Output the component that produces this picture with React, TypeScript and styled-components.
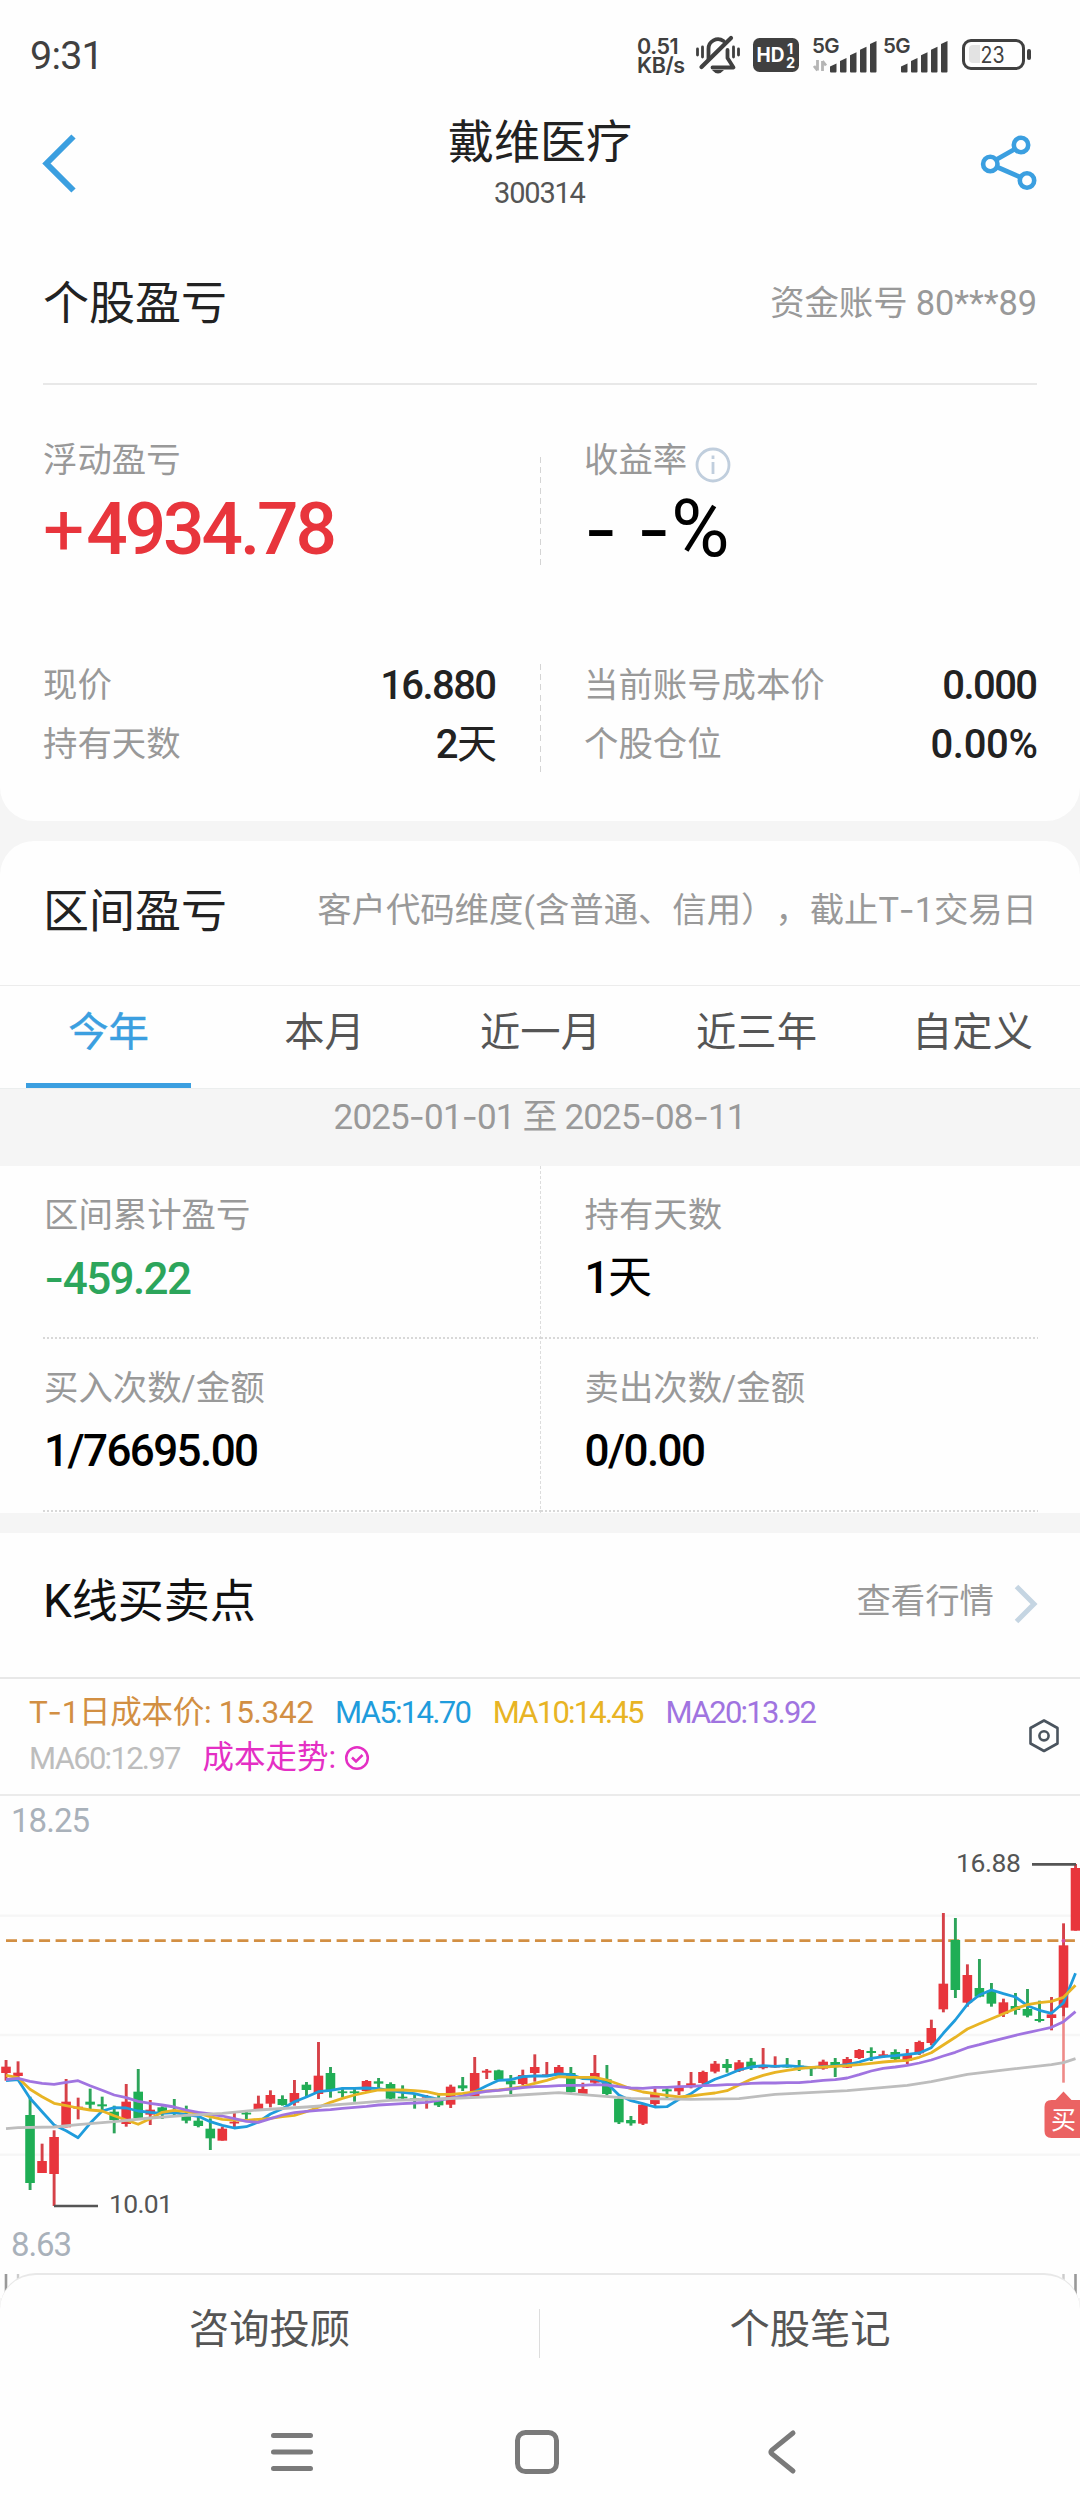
import React from 'react';
import styled, { createGlobalStyle } from 'styled-components';

const Global = createGlobalStyle`
  * { box-sizing: border-box; }
  body { margin: 0; background: #f5f5f5; font-family: Roboto, 'Noto Sans CJK SC', sans-serif; text-spacing-trim: space-all; }
  svg { display: block; flex: none; overflow: visible; }
`;

const BLUE = '#3b9fe0';
const RED = '#e8353c';
const GREEN = '#1fae55';

const Screen = styled.div`
  width: 1080px;
  height: 2520px;
  overflow: hidden;
  display: flex;
  flex-direction: column;
  background: #f5f5f5;
`;

const Txt = styled.span<{ $s: number; $c?: string; $ls?: number; $w?: number }>`
  font-size: ${p => p.$s}px;
  line-height: 1;
  color: ${p => p.$c || '#222'};
  letter-spacing: ${p => p.$ls || 0}px;
  margin-right: ${p => -(p.$ls || 0)}px;
  font-weight: ${p => p.$w || 400};
  white-space: nowrap;
`;
const Dash = styled.span`
  font-family: Inter, sans-serif;
`;
const Unit = styled.span`
  font-weight: 400;
`;
const Sign = styled.span`
  font-weight: 400;
  margin-right: 5px;
`;
const Percent = styled.span`
  font-size: 80px;
`;

const StatusBar = styled.div`
  height: 110px;
  padding: 0 48px 0 30px;
  display: flex;
  align-items: center;
  background: #fefefe;
  flex: none;
`;
const StatusIcons = styled.div`
  margin-left: auto;
  display: flex;
  align-items: center;
`;
const NetSpeed = styled.div`
  width: 48px;
  margin-right: 10px;
  padding-top: 1px;
  font: 600 21.5px/19px Inter, sans-serif;
  letter-spacing: -0.4px;
  color: #404040;
  white-space: pre;
`;
const IconSlot = styled.div<{ $ml: number }>`
  margin-left: ${p => p.$ml}px;
`;
const Clock = styled.div`
  padding-top: 2px;
`;

const NavHeader = styled.div`
  height: 110px;
  display: grid;
  grid-template-columns: 160px 1fr 160px;
  background: #fefefe;
  flex: none;
`;
const NavBack = styled.div`
  padding: 24px 0 0 41px;
`;
const NavShare = styled.div`
  display: flex;
  justify-content: flex-end;
  padding: 22px 40px 0 0;
`;
const TitleBlock = styled.div`
  display: flex;
  flex-direction: column;
  align-items: center;
  padding-top: 9px;
  gap: 14px;
`;

const Card = styled.section<{ $h: number; $r?: string; $mt?: number }>`
  height: ${p => p.$h}px;
  margin-top: ${p => p.$mt || 0}px;
  border-radius: ${p => p.$r || '0'};
  background: #fefefe;
  flex: none;
  overflow: hidden;
`;
const CardHead = styled.div<{ $h: number; $inset?: boolean; $line?: string; $pt?: number; $pb?: number }>`
  height: ${p => p.$h}px;
  margin: 0 ${p => (p.$inset ? 43 : 0)}px;
  padding: ${p => p.$pt || 0}px ${p => (p.$inset ? 0 : 43)}px ${p => p.$pb || 0}px;
  border-bottom: ${p => p.$line || '2px solid #e8e8e8'};
  display: flex;
  align-items: center;
  justify-content: space-between;
`;
const HeadRight = styled.div`
  display: flex;
  align-items: center;
  gap: 20px;
`;
const Chevron = styled.div`
  padding-top: 5px;
`;

const Split = styled.div<{ $h: number; $mt: number }>`
  display: grid;
  grid-template-columns: 541px 539px;
  height: ${p => p.$h}px;
  margin-top: ${p => p.$mt}px;
`;
const dashV = `repeating-linear-gradient(to bottom, #d4d4d4 0 6px, transparent 6px 10.2px)`;
const SplitLeft = styled.div`
  padding: 0 44px 0 43px;
  background: ${dashV} right top / 1px 100% no-repeat;
`;
const SplitRight = styled.div`
  padding: 0 42px 0 43px;
`;
const BigLabel = styled.div`
  display: flex;
  align-items: center;
  height: 34px;
  margin-top: -14px;
  gap: 8px;
`;
const InfoWrap = styled.div`
  padding-top: 9px;
`;
const BigValue = styled.div`
  display: flex;
  align-items: center;
  height: 60px;
  margin-top: 22px;
`;
const PairRow = styled.div`
  display: flex;
  justify-content: space-between;
  align-items: center;
  height: 59px;
`;
const PairList = styled.div`
  margin-top: -8px;
`;

const Tabs = styled.div`
  height: 103px;
  display: grid;
  grid-template-columns: repeat(5, 216px);
  border-bottom: 1px solid #ebeeee;
`;
const Tab = styled.div<{ $on?: boolean }>`
  display: flex;
  justify-content: center;
  align-items: flex-start;
  padding: 27px 0 0 1px;
  font-size: 40.3px;
  line-height: 40px;
  color: ${p => (p.$on ? BLUE : '#555')};
  -webkit-text-stroke: ${p => (p.$on ? `0.5px ${BLUE}` : '0')};
  background: ${p => (p.$on ? `linear-gradient(${BLUE}, ${BLUE}) 26px 97px / 165px 6px no-repeat` : 'none')};
`;
const DateBand = styled.div`
  height: 77px;
  background: #f5f5f5;
  display: flex;
  justify-content: center;
  padding-top: 10px;
  flex: none;
`;
const Stats = styled.div`
  height: 347px;
  display: grid;
  grid-template-columns: 1fr 1fr;
  grid-template-rows: 173px 173px;
  background: repeating-linear-gradient(to bottom, #dcdcdc 0 3px, transparent 3px 5px) 540px 0 / 1px 100% no-repeat #fefefe;
  padding: 0 42px 0 43px;
  flex: none;
`;
const Stat = styled.div<{ $right?: boolean }>`
  display: flex;
  flex-direction: column;
  padding: 32px 0 0 ${p => (p.$right ? 44 : 1)}px;
  gap: 24px;
  background: repeating-linear-gradient(to right, #d8d8d8 0 2px, transparent 2px 4px) 0 100% / 100% 2px no-repeat;
`;

const Legend = styled.div`
  height: 117px;
  border-bottom: 2px solid #ebebeb;
  display: flex;
  justify-content: space-between;
  padding: 17px 20px 0 29px;
`;
const LegendLines = styled.div`
  display: flex;
  flex-direction: column;
  gap: 14px;
`;
const LegendLine = styled.div`
  display: flex;
  align-items: center;
  height: 32px;
  gap: 21px;
`;
const LegendItem = styled.span`
  display: flex;
  align-items: center;
  gap: 8px;
`;
const GearWrap = styled.div`
  padding-top: 22px;
`;

const Bottom = styled.div`
  height: 247px;
  flex: none;
  position: relative;
  z-index: 1;
  background: #fefefe;
  border-top: 2.5px solid #e8e8e8;
  border-radius: 36px 36px 0 0;
  margin-top: -25px;
`;
const Actions = styled.div`
  height: 110px;
  display: grid;
  grid-template-columns: 539px 1px 540px;
  align-items: center;
  justify-items: center;
`;
const ActionSep = styled.i`
  width: 1px;
  height: 49px;
  margin-top: 6px;
  background: #ddd;
`;
const SysNav = styled.div`
  display: grid;
  grid-template-columns: 245px 232px 30px;
  align-items: center;
  height: 134px;
  padding-left: 269px;
`;

const X = (k: number) => 6 + 12.017 * k;

// Each candle: direction (1 up, 0 down), high, body top, body bottom, low, in thirds of a pixel.
const candles: number[][] = [
  [1,660,680,699,722],[1,664,698,708,712],[0,770,825,1029,1050],[1,911,963,999,999],[1,871,891,1002,1098],
  [1,717,785,862,862],[1,773,800,806,838],[0,746,785,794,808],[0,770,793,799,812],[0,797,815,840,880],
  [1,732,785,852,860],[0,687,755,835,840],[1,780,809,824,855],[0,799,802,820,837],[0,777,815,820,825],
  [0,797,825,842,850],[0,815,842,858,862],[0,835,866,895,930],[1,860,866,902,902],[1,818,845,850,863],
  [0,815,818,822,842],[1,767,791,808,812],[1,751,765,791,802],[0,766,777,795,797],[1,720,759,788,797],
  [0,726,734,750,770],[1,606,707,762,777],[0,681,699,752,773],[0,743,754,758,772],[0,745,754,758,785],
  [1,720,723,753,755],[0,714,724,731,745],[0,727,732,776,778],[0,736,770,775,780],[0,763,775,778,806],
  [1,765,772,775,806],[0,765,780,796,801],[1,734,740,794,804],[0,711,736,745,753],[1,651,699,770,770],
  [1,687,692,698,717],[0,689,691,720,723],[0,705,722,733,762],[1,689,705,732,736],[1,643,681,699,725],
  [1,666,703,708,710],[1,675,681,702,708],[0,681,699,756,758],[1,728,747,762,762],[1,645,699,728,732],
  [0,675,718,762,766],[0,770,776,847,852],[0,828,840,850,857],[1,790,794,851,855],[1,745,761,792,798],
  [0,745,748,754,775],[1,723,738,754,765],[1,696,730,738,745],[1,692,696,729,732],[1,663,671,695,700],
  [0,657,672,684,698],[1,660,667,692,696],[0,654,665,683,690],[1,624,679,683,688],[1,649,677,681,683],
  [0,654,677,681,683],[0,660,677,682,693],[0,678,682,687,708],[1,659,665,686,689],[0,654,666,678,711],
  [1,651,657,683,684],[1,627,630,654,657],[0,622,633,639,663],[1,632,643,648,653],[0,628,636,657,663],
  [1,627,643,662,672],[1,602,606,640,645],[1,539,564,609,616],[1,219,431,508,517],[0,234,300,450,474],
  [1,373,405,488,500],[0,357,444,470,472],[0,429,452,491,500],[1,476,487,522,531],[0,459,498,510,524],
  [0,447,507,527,532],[0,482,537,543,547],[1,471,523,534,571],[1,250,316,503,530],[1,72,84,272,272],
];
const ma5 = [722,719,775,815,855,872,893,850,813,803,804,813,817,820,818,824,829,845,856,864,860,846,822,806,785,771,755,751,745,745,744,746,752,757,761,770,778,776,768,755,737,721,719,710,708,708,702,704,716,717,730,765,782,791,801,800,778,761,736,718,705,690,681,677,679,677,680,683,680,678,674,666,655,650,647,643,639,623,580,540,493,465,450,461,471,497,511,520,488,400];
const ma10 = [706,713,748,770,790,797,804,810,813,827,840,853,836,817,811,815,820,830,838,840,841,838,835,830,826,815,802,787,775,765,757,750,750,750,752,755,763,763,760,756,753,750,746,740,730,721,710,712,712,712,720,733,746,756,761,766,771,768,763,759,752,735,718,706,697,691,686,682,681,679,677,674,670,666,663,661,652,638,615,592,567,551,536,521,506,494,488,484,472,436];
const ma20 = [719,715,724,730,733,727,722,737,751,765,773,784,790,795,801,810,817,822,828,836,844,847,836,825,818,814,811,809,805,802,799,795,793,791,789,787,781,774,769,760,754,751,747,743,740,739,737,736,736,734,735,740,744,745,742,742,740,739,737,736,734,733,730,729,729,728,728,725,721,719,714,704,693,685,681,676,669,660,648,637,623,614,604,595,586,578,570,562,545,515];
const ma60: [number, number][] = [[0,866],[1,863],[4,861],[6,854],[9,845],[12,834],[15,826],[18,820],[21,810],[25,801],[29,790],[32,781],[36,777],[41,769],[46,758],[48,764],[52,775],[57,778],[61,776],[64,763],[70,752],[75,736],[77,725],[80,703],[84,686],[87,674],[88,668],[89,656]];

// The plot area begins 44px below the top of the chart drawing.
const Y = (v: number) => 44 + v / 3;
const line = (vals: number[]) => vals.map((v, k) => `${X(k).toFixed(1)},${Y(v).toFixed(1)}`).join(' ');

const KChart = () => (
  <svg width="1080" height="502" viewBox="0 0 1080 502" fontFamily="Roboto, 'Noto Sans CJK SC', sans-serif">
    {[227, 585, 944].map(g => <rect key={g} x="0" y={Y(g) - 1.2} width="1080" height="2.4" fill="#f6f6f6" />)}
    <path d={`M6 ${Y(302)}H1075`} stroke="#d28f43" strokeWidth="2.8" strokeDasharray="11 5.53" />
    {candles.map(([up, h, t, b, l], k) => (
      <g key={k} fill={up ? RED : GREEN}>
        <rect x={X(k) - 1.4} y={Y(h)} width="2.9" height={(l - h) / 3} fill={up ? '#d64148' : '#2da45a'} />
        <rect x={X(k) - 4.8} y={Y(t)} width="9.6" height={Math.max(1.8, (b - t) / 3)} />
      </g>
    ))}
    <rect x={X(88) - 1.3} y={Y(530)} width="2.6" height="66" fill="#ee8a88" />
    <circle cx={X(88)} cy={Y(302)} r="2" fill="#d94c9c" />
    <g fill="none" strokeWidth="2.8" strokeLinejoin="round">
      <polyline points={line(ma5)} stroke="#1f9cdc" />
      <polyline points={line(ma10)} stroke="#e8b424" />
      <polyline points={line(ma20)} stroke="#a074e0" />
      <polyline points={ma60.map(([k, v]) => `${X(k)},${Y(v)}`).join(' ')} stroke="#bdbdbd" />
    </g>
    <path d={`M54 ${Y(1098)}H98M1032 ${Y(73)}H1076`} stroke="#555" strokeWidth="2.6" />
    <text x="11" y="36" fontSize="33" fill="#a9b1ba" textLength="79">18.25</text>
    <text x="11" y="460" fontSize="33" fill="#a9b1ba" textLength="61">8.63</text>
    <text x="956" y="76" fontSize="26.5" fill="#555" textLength="65">16.88</text>
    <text x="109" y="417" fontSize="26.5" fill="#555" textLength="64">10.01</text>
    <path d="M1063.5 295.5l8 8.5h10v38h-30q-7 0-7-7v-24q0-7 7-7h4z" fill="#eb6363" />
    <text x="1051" y="333" fontSize="25" fill="#fff">买</text>
    <path d="M6 478v24M1075.500 478v24" stroke="#999" strokeWidth="2.6" />
    <path d="M18 478v10M1063.500 478v10" stroke="#ccc" strokeWidth="2.4" />
  </svg>
);

const MutedBell = () => (
  <svg width="46" height="40" viewBox="695 36 46 40" fill="none" stroke="#404040" strokeWidth="3.8" strokeLinecap="round">
    <path d="M708.500 60V50a9.500 9.500 0 0 1 15-8" />
    <path d="M727.500 51v8l6 9.500h-21" strokeLinejoin="round" />
    <path d="M701.500 68L731 39" strokeWidth="4.2" />
    <path d="M712 71h12q-3 3.500-6 3.500t-6-3.500z" fill="#404040" stroke="none" />
    <path d="M697.500 50v6M738.500 50v6M702.500 48v10M733.500 48v10" strokeWidth="2.800" />
  </svg>
);

const HdBadge = () => (
  <svg width="46" height="34" viewBox="0 0 46 34" fontFamily="Inter, sans-serif" fontWeight="700" fill="#fff">
    <rect width="46" height="34" rx="6.500" fill="#404040" />
    <text x="3.500" y="24" fontSize="20" textLength="28" lengthAdjust="spacingAndGlyphs">HD</text>
    <text x="34" y="15.500" fontSize="14.500">1</text>
    <text x="33" y="29.500" fontSize="14.500">2</text>
  </svg>
);

const Signal = ({ data }: { data?: boolean }) => {
  const x0 = data ? 18 : 17;
  return (
    <svg width={data ? 67 : 65} height="36" viewBox={data ? '-1 0 67 36' : '0 0 65 36'} fill="#404040">
      <text x={data ? 0 : -1} y="16" fontFamily="Inter, sans-serif" fontWeight="600" fontSize="20.5" textLength="27.5">5G</text>
      {data && (
        <path d="M5.500 23v10.500M2 29l3.500 4.500M10.500 34V24M14 28.500L10.500 24" stroke="#b5b5b5" strokeWidth="2.800" fill="none" />
      )}
      {[0, 1, 2, 3, 4].map(i => (
        <path key={i} d={`M${x0 + i * 10} 34.500V${29.500 - i * 5.600}l6.500-3v${8 + i * 5.600}q0 1-1 1h-4.500q-1 0-1-1z`} />
      ))}
    </svg>
  );
};

const Battery = () => (
  <svg width="70" height="32" viewBox="0 0 70 32" fill="none">
    <rect x="1.500" y="1.500" width="60" height="28" rx="7.500" stroke="#404040" strokeWidth="3" />
    <path d="M11 6h7v18h-7q-4 0-4-4V10q0-4 4-4z" fill="#e3e3e3" />
    <rect x="65" y="10" width="4" height="11" rx="2" fill="#404040" />
    <text x="18.500" y="24" fontSize="23" fill="#404040" fontFamily="Inter, sans-serif" textLength="24" lengthAdjust="spacingAndGlyphs">23</text>
  </svg>
);

// Hyphens take a wider face and the day unit a lighter weight than the digits around them.
const rich = (s: string) =>
  s.split(/(-|天)/).map((part, i) => {
    if (part === '-') return <Dash key={i}>-</Dash>;
    if (part === '天') return <Unit key={i}>天</Unit>;
    return part;
  });

const tabs = ['今年', '本月', '近一月', '近三年', '自定义'];
const stats = [
  { label: '区间累计盈亏', value: '-459.22', c: '#2ca55b' },
  { label: '持有天数', value: '1天', c: '#000' },
  { label: '买入次数/金额', value: '1/76695.00', c: '#000' },
  { label: '卖出次数/金额', value: '0/0.00', c: '#000' },
];
const GRAY = '#999';

const Pair = ({ label, value, ls = -1.6 }: { label: string; value: string; ls?: number }) => (
  <PairRow>
    <Txt $s={34.4} $c={GRAY}>{label}</Txt>
    <Txt $s={40} $w={500} $ls={ls}>{rich(value)}</Txt>
  </PairRow>
);

export default function App() {
  return (
    <Screen>
      <Global />
      <StatusBar>
        <Clock><Txt $s={39.5} $c="#404040" $ls={-0.8}>9:31</Txt></Clock>
        <StatusIcons>
          <NetSpeed>{'0.51\nKB/s'}</NetSpeed>
          <MutedBell />
          <IconSlot $ml={12}><HdBadge /></IconSlot>
          <IconSlot $ml={12}><Signal data /></IconSlot>
          <IconSlot $ml={6}><Signal /></IconSlot>
          <IconSlot $ml={13}><Battery /></IconSlot>
        </StatusIcons>
      </StatusBar>
      <NavHeader>
        <NavBack>
          <svg width="36" height="60" viewBox="0 0 36 60"><path d="M32.500 2.500L5.500 29.500L32.500 56.500" fill="none" stroke={BLUE} strokeWidth="6" /></svg>
        </NavBack>
        <TitleBlock>
          <Txt $s={46}>戴维医疗</Txt>
          <Txt $s={29} $c="#555" $ls={-1.2}>300314</Txt>
        </TitleBlock>
        <NavShare>
          <svg width="60" height="62" viewBox="980 132 60 62" fill="none" stroke={BLUE} strokeWidth="4.6">
            <circle cx="1021" cy="145" r="7.200" /><circle cx="990.300" cy="164" r="7.200" /><circle cx="1027" cy="180.500" r="7.200" />
            <path d="M996.500 159.500L1015 149M997 167L1020 177" strokeWidth="4.800" />
          </svg>
        </NavShare>
      </NavHeader>

      <Card $h={601} $r="0 0 34px 34px">
        <CardHead $h={165} $inset $pt={3}>
          <Txt $s={46}>个股盈亏</Txt>
          <Txt $s={34.4} $c={GRAY} $ls={-0.1}>资金账号 80***89</Txt>
        </CardHead>
        <Split $h={108} $mt={72}>
          <SplitLeft>
            <BigLabel><Txt $s={34.4} $c={GRAY}>浮动盈亏</Txt></BigLabel>
            <BigValue><Txt $s={73} $c={RED} $w={500} $ls={-3.1}><Sign>+</Sign>4934.78</Txt></BigValue>
          </SplitLeft>
          <SplitRight>
            <BigLabel>
              <Txt $s={34.4} $c={GRAY}>收益率</Txt>
              <InfoWrap>
                <svg width="36" height="36" viewBox="0 0 36 36" fill="none" stroke="#c0cedd" strokeWidth="2.800">
                  <circle cx="18" cy="18" r="16" /><path d="M18 15v12M18 8.500v3.500" />
                </svg>
              </InfoWrap>
            </BigLabel>
            <BigValue><Txt $s={73} $c="#000" $ls={0.6}><Dash>-</Dash> <Dash>-</Dash><Percent>%</Percent></Txt></BigValue>
          </SplitRight>
        </Split>
        <Split $h={108} $mt={99}>
          <SplitLeft><PairList><Pair label="现价" value="16.880" /><Pair label="持有天数" value="2天" /></PairList></SplitLeft>
          <SplitRight><PairList><Pair label="当前账号成本价" value="0.000" /><Pair label="个股仓位" value="0.00%" ls={-0.3} /></PairList></SplitRight>
        </Split>
      </Card>

      <Card $h={248} $mt={20} $r="34px 34px 0 0">
        <CardHead $h={145} $line="1px solid #ececec" $pb={5}>
          <Txt $s={46}>区间盈亏</Txt>
          <Txt $s={34.4} $c={GRAY} $ls={-0.05}>{rich('客户代码维度(含普通、信用），截止T-1交易日')}</Txt>
        </CardHead>
        <Tabs>{tabs.map((t, i) => <Tab key={t} $on={i === 0}>{t}</Tab>)}</Tabs>
      </Card>
      <DateBand><Txt $s={35} $c={GRAY} $ls={-0.85}>{rich('2025-01-01 至 2025-08-11')}</Txt></DateBand>
      <Stats>
        {stats.map((s, i) => (
          <Stat key={s.label} $right={i % 2 === 1}>
            <Txt $s={34.4} $c={GRAY}>{s.label}</Txt>
            <Txt $s={44} $c={s.c} $w={500} $ls={-1.6}>{rich(s.value)}</Txt>
          </Stat>
        ))}
      </Stats>

      <Card $h={765} $mt={20}>
        <CardHead $h={146} $pb={8}>
          <Txt $s={46} $c="#111">K线买卖点</Txt>
          <HeadRight>
            <Txt $s={34.4} $c={GRAY}>查看行情</Txt>
            <Chevron>
              <svg width="23" height="40" viewBox="0 0 23 40"><path d="M2.500 2.500L20 20L2.500 37.500" fill="none" stroke="#c5d5e2" strokeWidth="5" /></svg>
            </Chevron>
          </HeadRight>
        </CardHead>
        <Legend>
          <LegendLines>
            <LegendLine>
              <Txt $s={31.5} $c="#d28f43" $ls={-0.3}>{rich('T-1日成本价: 15.342')}</Txt>
              <Txt $s={31} $c="#1f9cdc" $ls={-1.7}>MA5:14.70</Txt>
              <Txt $s={31} $c="#e8b424" $ls={-1.8}>MA10:14.45</Txt>
              <Txt $s={31} $c="#a074e0" $ls={-1.8}>MA20:13.92</Txt>
            </LegendLine>
            <LegendLine>
              <Txt $s={31} $c="#bdbdbd" $ls={-1.7}>MA60:12.97</Txt>
              <LegendItem>
                <Txt $s={31.5} $c="#e42fc4">成本走势:</Txt>
                <svg width="26" height="26" viewBox="0 0 26 26" fill="none" stroke="#e42fc4" strokeWidth="2.500"><circle cx="13" cy="13" r="10.800" /><path d="M8 12.500l4 4 6.500-6.500" /></svg>
              </LegendItem>
            </LegendLine>
          </LegendLines>
          <GearWrap>
            <svg width="32" height="36" viewBox="0 0 32 36" fill="none" stroke="#4a545e" strokeWidth="2.600" strokeLinejoin="round"><path d="M16 2.500L29.500 10V25.500L16 33L2.500 25.500V10z" /><circle cx="16" cy="17.800" r="4.600" /></svg>
          </GearWrap>
        </Legend>
        <KChart />
      </Card>
      <Bottom>
        <Actions>
          <Txt $s={40.3} $c="#555">咨询投顾</Txt>
          <ActionSep />
          <Txt $s={40.3} $c="#555">个股笔记</Txt>
        </Actions>
        <SysNav>
          <svg width="46" height="46" viewBox="0 0 46 46" stroke="#7a7a7a" strokeWidth="5" strokeLinecap="round"><path d="M4.500 6.500h37M4.500 23h37M4.500 39.500h37" /></svg>
          <svg width="46" height="46" viewBox="0 0 46 46" fill="none" stroke="#7a7a7a" strokeWidth="5"><rect x="3.500" y="3.500" width="39" height="39" rx="8" /></svg>
          <svg width="76" height="46" viewBox="-21 0 76 46" fill="none" stroke="#7a7a7a" strokeWidth="5" strokeLinecap="round"><path d="M26 4L5 21Q3 23 5 25L26 42" /></svg>
        </SysNav>
      </Bottom>
    </Screen>
  );
}
